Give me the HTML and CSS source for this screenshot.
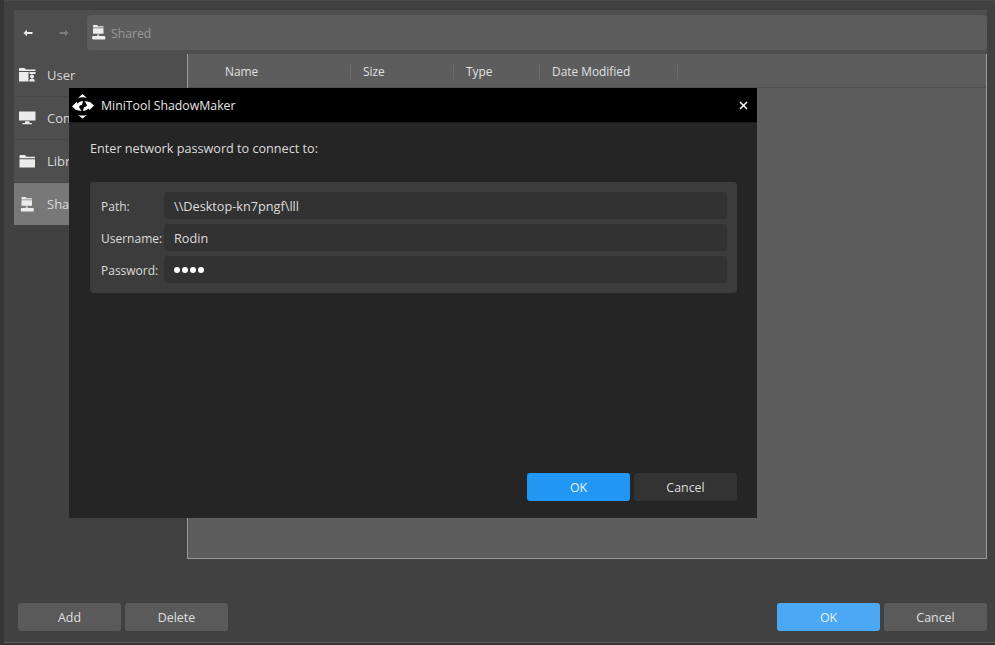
FILE: index.html
```html
<!DOCTYPE html>
<html lang="en">
<head>
  <meta charset="UTF-8">
  <title>MiniTool ShadowMaker</title>
  <link rel="stylesheet" href="styles.css">
</head>
<body>
  <div class="window">
    <div class="toolbar">
      <span class="nav-arrow">
        <svg width="10" height="8" viewBox="0 0 10 8"><path d="M0.5 4L4 0.8V3H9.5V5H4V7.2Z" fill="#f0f0f0"/></svg>
      </span>
      <span class="nav-arrow">
        <svg width="10" height="8" viewBox="0 0 10 8"><path d="M9.5 4L6 0.8V3H0.5V5H6V7.2Z" fill="#7c7c7c"/></svg>
      </span>
      <div class="address">
        <svg class="share-icon" width="14" height="15" viewBox="0 0 14 15"><use href="#shared"/></svg>
        <span>Shared</span>
      </div>
    </div>

    <div class="content">
      <ul class="sidebar">
        <li class="side-row">
          <svg width="17" height="14" viewBox="0 0 17 14"><path d="M0 1C0 .4.400 0 1 0H5.500L7 1.500H16.500V3H0ZM0 4H9.500V13.500H0ZM10.500 4H16.500V6H10.500ZM13 6.500A2 2 0 1 1 12.990 6.500ZM10.200 13.500C10.200 11.500 11.200 10.800 13 10.800S15.800 11.500 15.800 13.500Z" fill="#ececec"/></svg>
          <span>User</span>
        </li>
        <li class="side-row">
          <svg width="17" height="14" viewBox="0 0 17 14"><path d="M0 .5H16.500V9.500H0ZM6 10.300H10.500V12H13V13.200H3.500V12H6Z" fill="#ececec"/></svg>
          <span>Computer</span>
        </li>
        <li class="side-row">
          <svg width="17" height="13" viewBox="0 0 16 13"><path d="M0 1.200C0 .5.500 0 1.200 0H5.500L7 1.800H15.500V3.300H0ZM0 4.300H15.500V12.500H0Z" fill="#ececec"/></svg>
          <span>Libraries</span>
        </li>
        <li class="side-row selected">
          <svg width="14" height="15" viewBox="0 0 14 15"><use href="#shared"/></svg>
          <span>Shared</span>
        </li>
      </ul>

      <div class="files">
        <div class="file-head">
          <span class="col col-name">Name</span>
          <span class="col col-size">Size</span>
          <span class="col col-type">Type</span>
          <span class="col col-date">Date Modified</span>
        </div>
      </div>
    </div>

    <div class="footer">
      <button class="btn">Add</button>
      <button class="btn">Delete</button>
      <span class="footer-gap"></span>
      <button class="btn btn-ok">OK</button>
      <button class="btn">Cancel</button>
    </div>
  </div>

  <div class="dialog">
    <div class="dialog-title">
      <svg class="logo" width="26" height="26" viewBox="0 0 26 26">
        <path d="M12.500 1L17 5C14.500 4 10.500 4 8 5ZM12.500 25.500L8 22C10.500 22.800 14.500 22.800 17 22Z" fill="#fff"/>
        <path d="M2 13.500L6.500 9L7.500 10.500C9 9 11 8 13 8L12 12C10.500 12 9.500 12.500 9 14L11.500 18L6 17Z" fill="#fff"/>
        <path d="M24 12.500L19.500 17L18.500 15.500C17 17 15 18 13 18L14 14C15.500 14 16.500 13.500 17 12L14.500 8L20 9Z" fill="#fff"/>
      </svg>
      <span class="dialog-name">MiniTool ShadowMaker</span>
      <svg class="close" width="9" height="9" viewBox="0 0 9 9"><path d="M1 1L8 8M8 1L1 8" stroke="#fff" stroke-width="1.500"/></svg>
    </div>
    <div class="dialog-body">
      <p class="prompt">Enter network password to connect to:</p>
      <div class="form">
        <div class="form-row">
          <span class="form-label">Path:</span>
          <div class="field">\\Desktop-kn7pngf\lll</div>
        </div>
        <div class="form-row">
          <span class="form-label">Username:</span>
          <div class="field">Rodin</div>
        </div>
        <div class="form-row">
          <span class="form-label">Password:</span>
          <div class="field dots"><i></i><i></i><i></i><i></i></div>
        </div>
      </div>
      <div class="dialog-actions">
        <button class="btn btn-primary">OK</button>
        <button class="btn btn-dark">Cancel</button>
      </div>
    </div>
  </div>

  <svg width="0" height="0" class="defs">
    <symbol id="shared" viewBox="0 0 14 15">
      <path d="M1 .8C1 .3 1.300 0 1.800 0H5L6 1.300H11.500V2.500H1ZM1 3.300H11.500V8.800H1ZM5.200 9.500H7.300V10.800H5.200ZM1.500 11H12C13.200 11 13.500 12 13.500 12.700C13.500 13.500 13 14.500 12 14.500H1.500C.5 14.500 0 13.500 0 12.700C0 12 .3 11 1.500 11Z" fill="#ececec"/>
    </symbol>
  </svg>
</body>
</html>
```

FILE: styles.css
```css
* {
  box-sizing: border-box;
}
html, body {
  height: 100%;
}
body {
  margin: 0;
  height: 645px;
  overflow: hidden;
  background-color: #353535;
  font-family: "Open Sans", "Noto Sans", sans-serif;
  font-size: 13px;
  color: #e4e4e4;
  position: relative;
}
.defs {
  position: absolute;
}

/* main window behind the dialog */
.window {
  margin-left: 4px;
  height: 643px;
  padding: 10px 8px 0 10px;
  display: flex;
  flex-direction: column;
  background-color: #414141;
  border-bottom: 1px solid #5c5c5c;
  box-shadow: inset 0 1px 0 #4a4a4a;
}
.toolbar {
  height: 44px;
  display: flex;
  align-items: center;
  gap: 8px;
  padding-top: 1px;
  background-color: #4e4e4e;
}
.nav-arrow {
  width: 28px;
  display: flex;
  justify-content: center;
}
.address {
  flex: 1;
  height: 35px;
  margin-left: 1px;
  padding-left: 5px;
  display: flex;
  align-items: center;
  gap: 5px;
  border-radius: 4px;
  background-color: #5d5d5d;
  color: #999;
  font-size: 12.200px;
}
.address span {
  padding-top: 2px;
}
.content {
  flex: 0 0 505px;
  display: flex;
}
.sidebar {
  width: 173px;
  margin: 0;
  padding: 0;
  list-style: none;
  background: linear-gradient(#4e4e4e 0, #4e4e4e 171px, transparent 171px);
}
.side-row {
  height: 43px;
  padding-left: 5px;
  display: flex;
  align-items: center;
  gap: 11px;
  border-bottom: 1px solid #474747;
  color: #d8d8d8;
}
.side-row svg {
  width: 17px;
}
.side-row.selected {
  height: 42px;
  background-color: #787878;
  border-bottom: 0;
}
.files {
  flex: 1;
  background-color: #5d5d5d;
  border-left: 1px solid #9a9a9a;
  border-right: 1px solid #9a9a9a;
  border-bottom: 1px solid #9a9a9a;
}
.file-head {
  height: 34px;
  display: flex;
  align-items: center;
  border-bottom: 1px solid #505050;
  color: #e0e0e0;
  font-size: 11.900px;
}
.col {
  height: 16px;
  line-height: 16px;
  border-right: 1px solid #6c6c6c;
}
.col-name {
  width: 163px;
  padding-left: 37px;
}
.col-size {
  width: 103px;
  padding-left: 12px;
}
.col-type {
  width: 86px;
  padding-left: 12px;
}
.col-date {
  width: 138px;
  padding-left: 12px;
}
.footer {
  padding: 0 0 0 4px;
  margin-top: 44px;
  display: flex;
  gap: 4px;
}
.footer-gap {
  flex: 1;
}
.btn {
  width: 103px;
  height: 28px;
  padding: 1px 0 0;
  border: 0;
  border-radius: 3px;
  background-color: #5a5a5a;
  color: #e0e0e0;
  font-family: inherit;
  font-size: 12.400px;
}
.btn-ok {
  background-color: #4aa8f5;
  color: #e8f4ff;
}

/* network password dialog */
.dialog {
  position: absolute;
  left: 69px;
  top: 88px;
  width: 688px;
  height: 430px;
  display: flex;
  flex-direction: column;
  background-color: #252525;
}
.dialog-title {
  height: 35px;
  display: flex;
  align-items: center;
  padding: 1px 9px 0 1px;
  background-color: #000;
  border-bottom: 1px solid #1a1a1a;
}
.logo {
  flex: none;
}
.dialog-name {
  flex: 1;
  margin-left: 5px;
  color: #e6e6e6;
  font-size: 12.300px;
}
.dialog-body {
  flex: 1;
  padding: 0 20px 17px 21px;
  display: flex;
  flex-direction: column;
}
.prompt {
  margin: 16px 0 25px;
  line-height: 18px;
  color: #dcdcdc;
  font-size: 12.650px;
}
.form {
  height: 111px;
  padding: 7.500px 10px 0 11px;
  border-radius: 4px;
  background-color: #3c3c3c;
}
.form-row {
  height: 32px;
  display: flex;
  align-items: center;
}
.form-label {
  width: 63px;
  flex: none;
  padding-top: 2px;
  white-space: nowrap;
  color: #dcdcdc;
  font-size: 12px;
}
.field {
  flex: 1;
  height: 27px;
  line-height: 29px;
  padding-left: 10px;
  border-radius: 4px;
  background-color: #323232;
  color: #dedede;
  font-size: 12.700px;
}
.dots {
  display: flex;
  align-items: center;
  gap: 2px;
}
.dots i {
  width: 6px;
  height: 6px;
  border-radius: 50%;
  background-color: #fff;
}
.dialog-actions {
  margin-top: auto;
  display: flex;
  justify-content: flex-end;
  gap: 4px;
}
.btn-primary {
  background-color: #2196f3;
  color: #e8f4ff;
}
.btn-dark {
  background-color: #333;
  color: #dcdcdc;
}
```
